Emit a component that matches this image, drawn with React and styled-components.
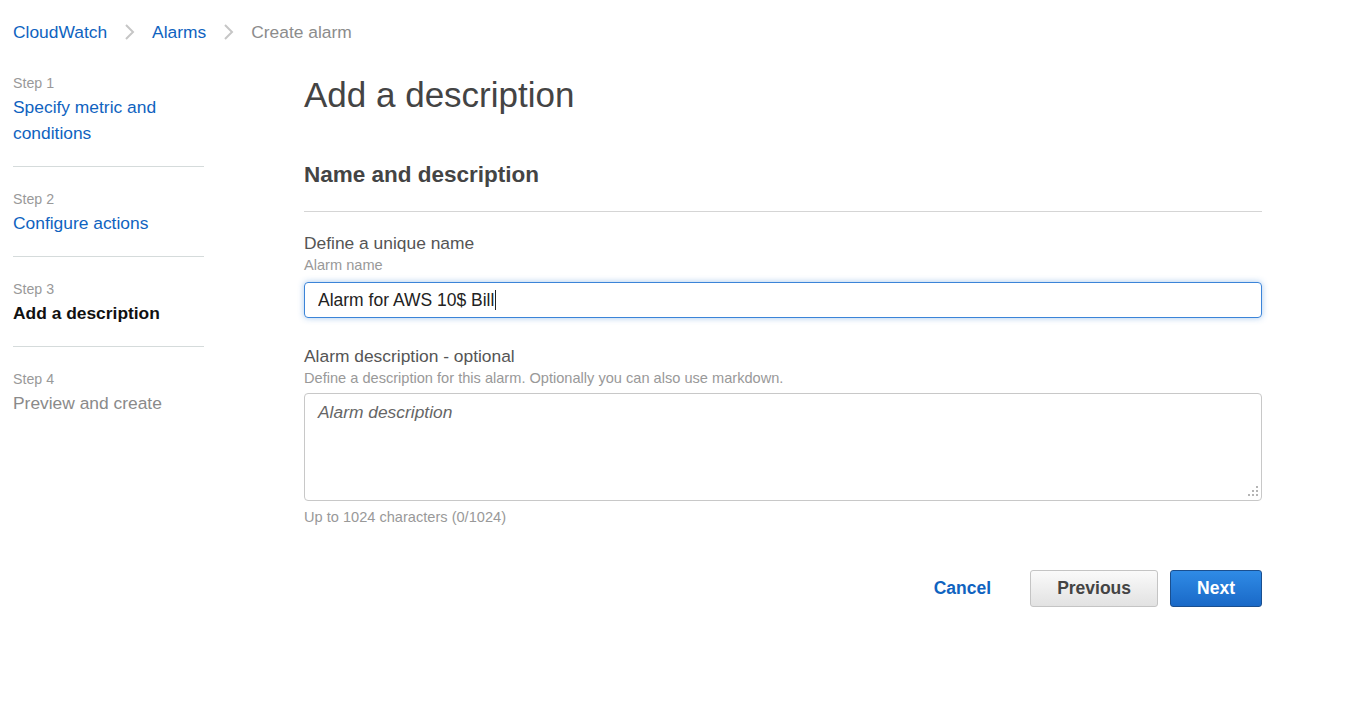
import React, { useEffect, useRef } from "react";
import styled, { createGlobalStyle } from "styled-components";

const GlobalStyle = createGlobalStyle`
  html, body {
    margin: 0;
    padding: 0;
    background: #fff;
    font-family: "Liberation Sans", Arial, sans-serif;
  }
  * {
    box-sizing: border-box;
  }
`;

const Page = styled.div`
  padding: 20px 108px 40px 13px;
  min-height: 715px;
`;

const Breadcrumbs = styled.nav`
  display: flex;
  align-items: center;
  gap: 17px;
  font-size: 17.4px;
  line-height: 24px;
  margin-bottom: 29px;
`;

const Crumb = styled.a`
  color: ${(p) => (p.$current ? "#8c8c8c" : "#0f63c0")};
  text-decoration: none;
  cursor: ${(p) => (p.$current ? "default" : "pointer")};
`;

const Layout = styled.div`
  display: grid;
  grid-template-columns: 191px 1fr;
  gap: 100px;
`;

const Steps = styled.ol`
  list-style: none;
  margin: 0;
  padding: 0;
`;

const StepItem = styled.li`
  padding: ${(p) => (p.$first ? "0" : "22px")} 0 20px;
  border-bottom: ${(p) => (p.$last ? "none" : "1px solid #d5dbdb")};
`;

const StepLabel = styled.div`
  font-size: 14.2px;
  line-height: 20px;
  margin-bottom: 1px;
  color: #999;
`;

const StepTitle = styled.div`
  font-size: 17.4px;
  line-height: 26px;
  color: ${(p) =>
    p.$state === "current" ? "#111" : p.$state === "done" ? "#0f63c0" : "#8a8a8a"};
  font-weight: ${(p) => (p.$state === "current" ? 700 : 400)};
`;

const Main = styled.main`
  min-width: 0;
`;

const Title = styled.h1`
  margin: 0;
  font-size: 35px;
  line-height: 44px;
  font-weight: 400;
  color: #444;
`;

const SectionTitle = styled.h2`
  margin: 43px 0 0;
  padding-bottom: 21px;
  border-bottom: 1px solid #d5d5d5;
  font-size: 22.5px;
  line-height: 30px;
  font-weight: 700;
  color: #444;
`;

const Field = styled.div`
  margin-top: ${(p) => p.$top || 0}px;
`;

const Label = styled.label`
  display: block;
  font-size: 17.4px;
  line-height: 22px;
  color: #555;
`;

const Hint = styled.div`
  font-size: 14.6px;
  line-height: 20px;
  color: #999;
  margin-top: ${(p) => p.$top || 0}px;
`;

const NameBox = styled.div`
  display: flex;
  align-items: center;
  height: 36px;
  margin-top: 7px;
  padding: 0 13px;
  border: 1px solid #3b84d8;
  border-radius: 4px;
  box-shadow: 0 0 6px rgba(59, 132, 216, 0.45);
`;

const TextInput = styled.input`
  flex: none;
  max-width: 100%;
  padding: 0;
  border: none;
  font-family: inherit;
  font-size: 17.5px;
  color: #222;
  outline: none;
`;

const Caret = styled.span`
  width: 1px;
  height: 20px;
  margin-left: 1px;
  background: #222;
`;

const AreaWrap = styled.div`
  position: relative;
  margin-top: 5px;
`;

const TextArea = styled.textarea`
  display: block;
  width: 100%;
  height: 108px;
  padding: 7px 13px;
  border: 1px solid #c8c8c8;
  border-radius: 4px;
  font-family: inherit;
  font-size: 17.4px;
  line-height: 22px;
  color: #222;
  resize: none;
  outline: none;

  &::placeholder {
    font-style: italic;
    color: #666;
  }
`;

const Grip = styled.svg`
  position: absolute;
  right: 3px;
  bottom: 3px;
  pointer-events: none;
`;

const Actions = styled.div`
  display: flex;
  justify-content: flex-end;
  align-items: center;
  gap: 12px;
  margin-top: 43px;
`;

const Button = styled.button`
  height: 37px;
  padding: 0 26px;
  border-radius: 3px;
  font-family: inherit;
  font-size: 17.5px;
  font-weight: 700;
  cursor: pointer;
  border: 1px solid ${(p) => (p.$primary ? "#1a4f8f" : "#c4c4c4")};
  color: ${(p) => (p.$primary ? "#fff" : "#444")};
  background: ${(p) =>
    p.$primary
      ? "linear-gradient(#2f8be6, #1a69c7)"
      : "linear-gradient(#fafafa, #e2e2e2)"};
`;

const LinkButton = styled.button`
  height: 37px;
  padding: 0 27px;
  border: none;
  background: none;
  font-family: inherit;
  font-size: 17.5px;
  font-weight: 700;
  color: #0f63c0;
  cursor: pointer;
`;

const Chevron = () => (
  <svg width="11" height="16" viewBox="0 0 11 16">
    <polyline
      points="2,1 9,8 2,15"
      fill="none"
      stroke="#c6c6c6"
      strokeWidth="2"
    />
  </svg>
);

const steps = [
  { label: "Step 1", title: "Specify metric and conditions", state: "done" },
  { label: "Step 2", title: "Configure actions", state: "done" },
  { label: "Step 3", title: "Add a description", state: "current" },
  { label: "Step 4", title: "Preview and create", state: "todo" },
];

const gripDots = [
  [9, 0],
  [5, 4],
  [9, 4],
  [1, 8],
  [5, 8],
  [9, 8],
];

const alarmName = "Alarm for AWS 10$ Bill";

export default function App() {
  const nameRef = useRef(null);

  useEffect(() => {
    const el = nameRef.current;
    if (el) {
      // shrink the input to its text so the caret sits right after it
      el.style.width = "0px";
      el.style.width = `${el.scrollWidth}px`;
    }
  }, []);

  return (
    <>
      <GlobalStyle />
      <Page>
        <Breadcrumbs>
          <Crumb>CloudWatch</Crumb>
          <Chevron />
          <Crumb>Alarms</Crumb>
          <Chevron />
          <Crumb $current>Create alarm</Crumb>
        </Breadcrumbs>
        <Layout>
          <Steps>
            {steps.map((s, i) => (
              <StepItem key={s.label} $first={i === 0} $last={i === steps.length - 1}>
                <StepLabel>{s.label}</StepLabel>
                <StepTitle $state={s.state}>{s.title}</StepTitle>
              </StepItem>
            ))}
          </Steps>
          <Main>
            <Title>Add a description</Title>
            <SectionTitle>Name and description</SectionTitle>
            <Field $top={20}>
              <Label htmlFor="alarm-name">Define a unique name</Label>
              <Hint $top={1}>Alarm name</Hint>
              <NameBox>
                <TextInput id="alarm-name" ref={nameRef} defaultValue={alarmName} />
                <Caret />
              </NameBox>
            </Field>
            <Field $top={27}>
              <Label htmlFor="alarm-desc">Alarm description - optional</Label>
              <Hint $top={1}>
                Define a description for this alarm. Optionally you can also use
                markdown.
              </Hint>
              <AreaWrap>
                <TextArea id="alarm-desc" placeholder="Alarm description" />
                <Grip width="12" height="12" viewBox="0 0 12 12">
                  {gripDots.map(([x, y]) => (
                    <rect key={`${x}-${y}`} x={x} y={y} width="2" height="2" fill="#b5b5b5" />
                  ))}
                </Grip>
              </AreaWrap>
              <Hint $top={6}>Up to 1024 characters (0/1024)</Hint>
            </Field>
            <Actions>
              <LinkButton>Cancel</LinkButton>
              <Button>Previous</Button>
              <Button $primary>Next</Button>
            </Actions>
          </Main>
        </Layout>
      </Page>
    </>
  );
}
